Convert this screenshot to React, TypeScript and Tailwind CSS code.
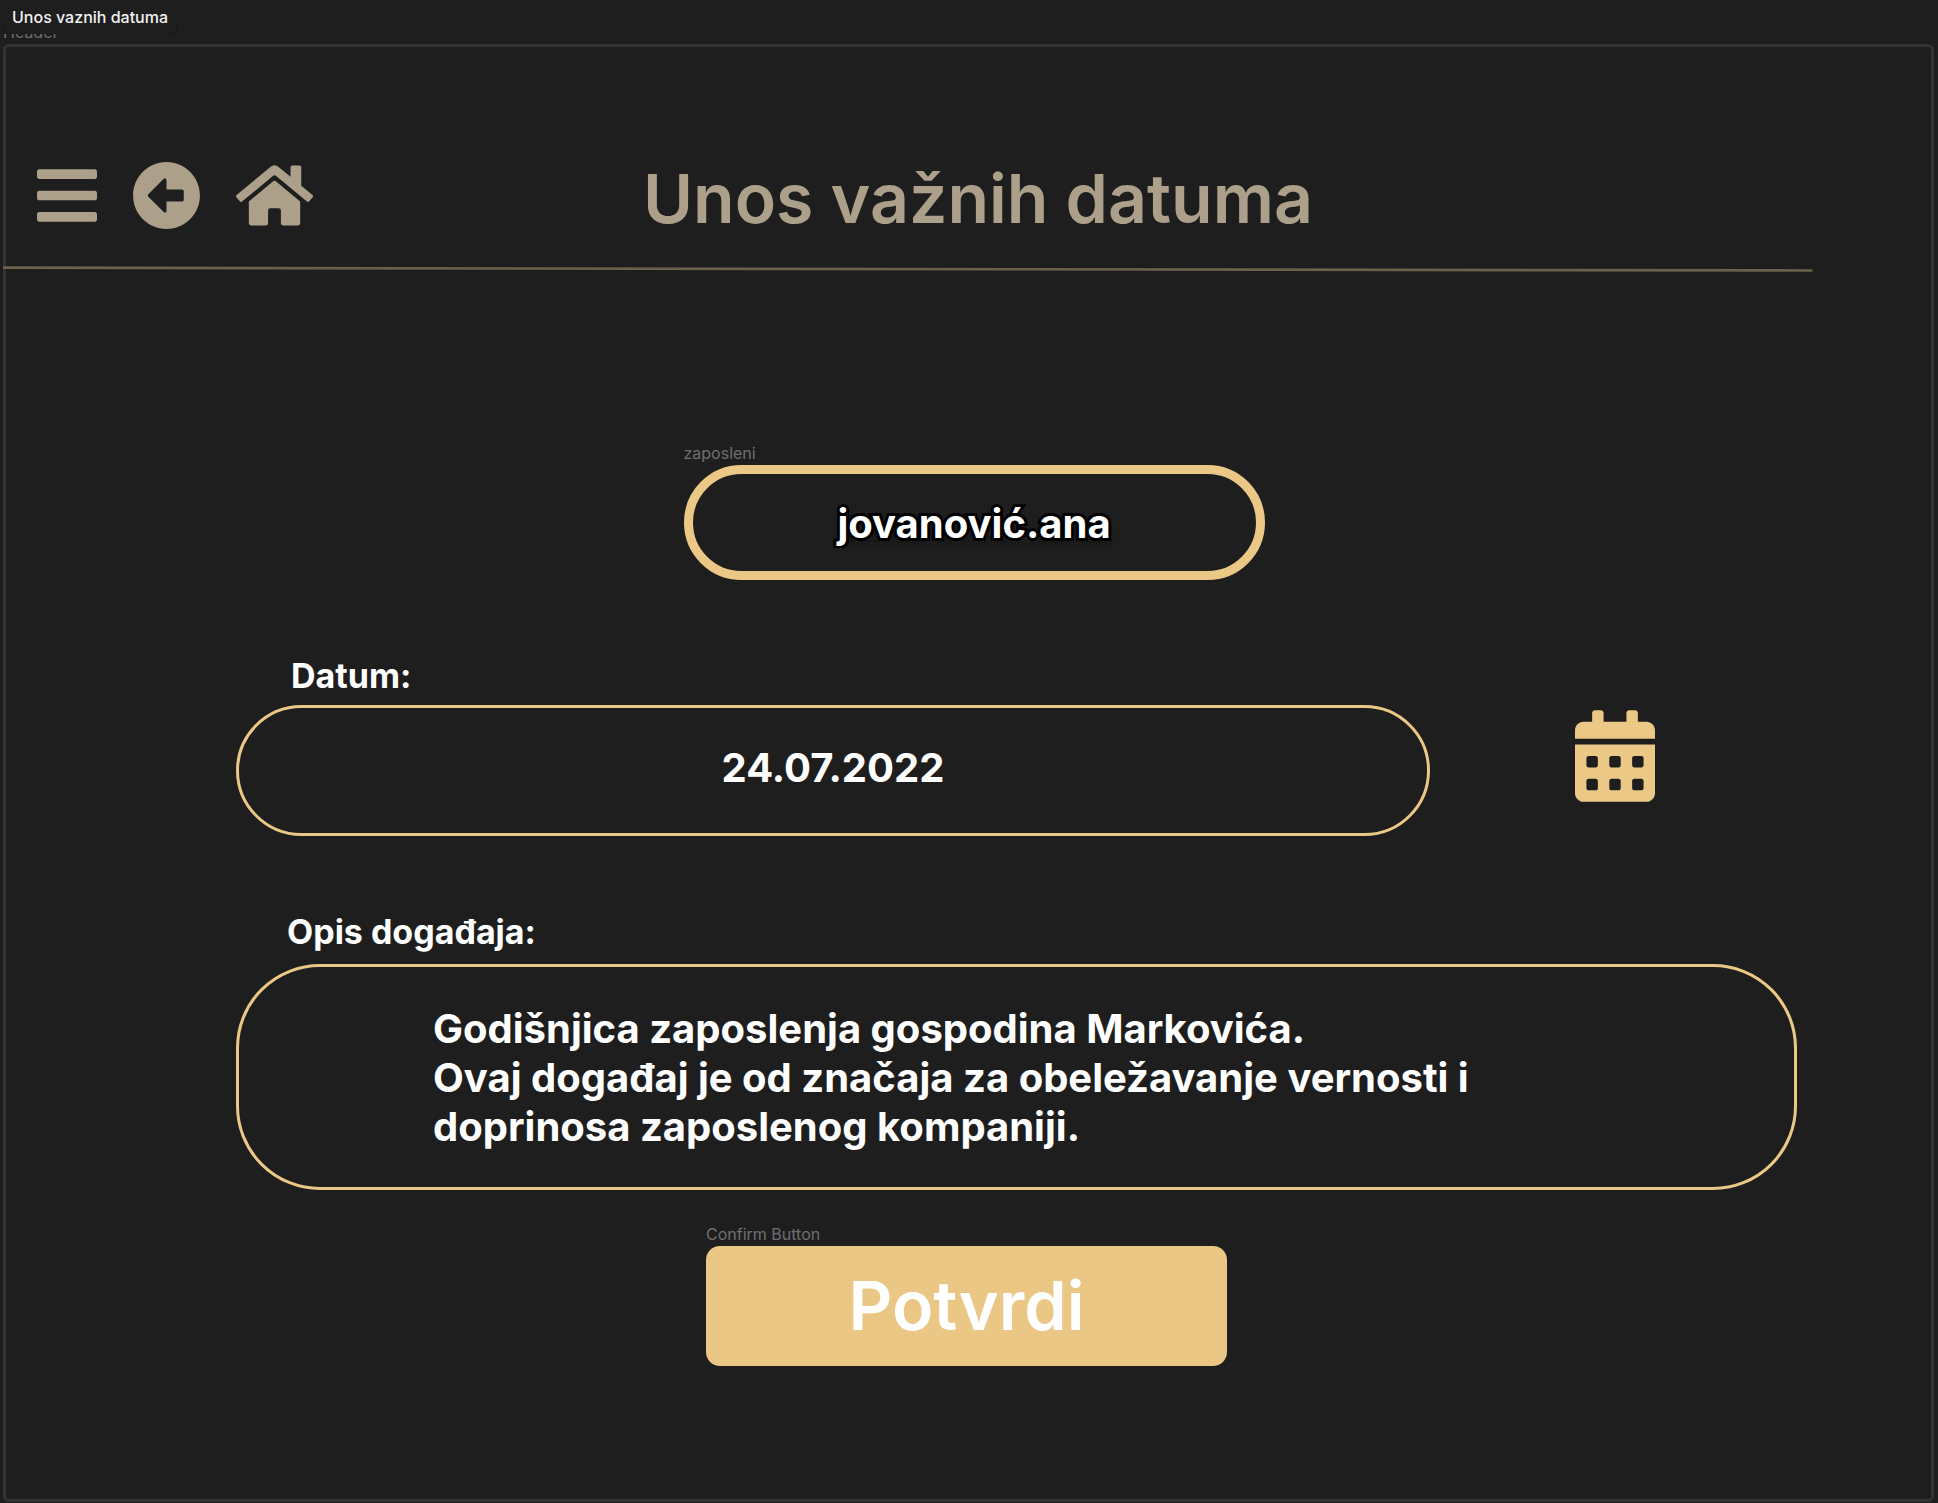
import { useState } from "react";
import {
  FaArrowAltCircleLeft,
  FaBars,
  FaCalendarAlt,
  FaHome,
} from "react-icons/fa";

const captionClass = "text-base leading-5 text-[#6f6f6f]";
const fieldLabelClass =
  "self-start text-[34px] leading-10 font-bold text-white";

function Header() {
  return (
    <header>
      <div className="grid grid-cols-[1fr_auto_1fr] items-start pt-[111px] pr-3 pb-7 pl-[31px] text-[#aca08b]">
        <nav
          aria-label="Navigacija"
          className="flex h-[74px] items-center gap-[34px]"
        >
          <button type="button" aria-label="Meni">
            <FaBars className="h-[69px] w-[60px]" />
          </button>
          <a href="#nazad" aria-label="Nazad">
            <FaArrowAltCircleLeft className="h-[69px] w-[71px]" />
          </a>
          <a href="#pocetna" aria-label="Početna">
            <FaHome className="h-[69px] w-[77px]" />
          </a>
        </nav>
        <h1 className="text-[68px] leading-20 font-semibold">
          Unos važnih datuma
        </h1>
      </div>
      <svg
        aria-hidden="true"
        viewBox="0 0 1809 6"
        preserveAspectRatio="none"
        className="-ml-[3px] block h-[6px] w-[94%]"
      >
        <line x1="0" y1="1.7" x2="1809" y2="4.5" stroke="#6d604b" strokeWidth="2.7" />
      </svg>
    </header>
  );
}

function EventForm() {
  const [employee, setEmployee] = useState("jovanović.ana");
  const [date, setDate] = useState("24.07.2022");
  const [description, setDescription] = useState(
    "Godišnjica zaposlenja gospodina Markovića.\nOvaj događaj je od značaja za obeležavanje vernosti i doprinosa zaposlenog kompaniji.",
  );

  return (
    <form
      className="flex flex-col pt-[171px] pb-20"
      onSubmit={(e) => e.preventDefault()}
    >
      <div className="flex justify-center pl-[11px]">
        <div className="flex w-[581px] flex-col gap-0.5">
          <label htmlFor="employee" className={captionClass}>
            zaposleni
          </label>
          <input
            id="employee"
            value={employee}
            onChange={(e) => setEmployee(e.target.value)}
            className="h-[115px] w-full rounded-full border-[9px] border-[#ebc885] bg-transparent pt-0.5 text-center text-[40px] font-bold text-white outline-none [-webkit-text-stroke:6px_#000] [paint-order:stroke_fill] [text-shadow:0_10px_10px_rgba(0,0,0,0.25)]"
          />
        </div>
      </div>

      <div className="mt-[76px] flex flex-col gap-[76px] pr-[134px] pl-[230px]">
        <div className="flex flex-col gap-[9px]">
          <label htmlFor="date" className={`${fieldLabelClass} pl-[55px]`}>
            Datum:
          </label>
          <div className="flex items-start gap-[145px] pr-[142px]">
            <input
              id="date"
              value={date}
              onChange={(e) => setDate(e.target.value)}
              className="h-[131px] min-w-0 flex-1 rounded-full border-3 border-[#ebc885] bg-transparent pb-1.5 text-center text-[40px] font-bold text-white outline-none"
            />
            <button type="button" aria-label="Izaberi datum" className="mt-[5px]">
              <FaCalendarAlt className="h-[92px] w-20 text-[#ebc885]" />
            </button>
          </div>
        </div>

        <div className="flex flex-col gap-3">
          <label htmlFor="description" className={`${fieldLabelClass} pl-[51px]`}>
            Opis događaja:
          </label>
          <textarea
            id="description"
            rows={3}
            value={description}
            onChange={(e) => setDescription(e.target.value)}
            className="block w-full resize-none overflow-hidden rounded-[84px] border-3 border-[#ebc885] bg-transparent pt-[37px] pr-[300px] pb-9 pl-[194px] text-[40px] leading-[49px] font-bold text-white outline-none"
          />
        </div>
      </div>

      <div className="mt-[34px] flex justify-center pr-1">
        <div className="flex w-[521px] flex-col gap-0.5">
          <span className={captionClass}>Confirm Button</span>
          <button
            type="submit"
            className="h-[120px] w-full rounded-[14px] bg-[#eac785] pb-0.5 text-[68px] leading-20 font-semibold text-white"
          >
            Potvrdi
          </button>
        </div>
      </div>
    </form>
  );
}

export default function App() {
  return (
    <div className="flex min-h-screen flex-col bg-[#1e1e1e] pr-1 pb-px pl-[3px] font-['Inter',sans-serif]">
      <div className="flex h-[34px] items-center self-start rounded-b-lg px-[9px] text-base font-medium text-[#f2f2f2] shadow-[0_0_1px_#000]">
        Unos vaznih datuma
      </div>
      <div className="flex h-2.5 items-end overflow-hidden pb-0.5">
        <span className={captionClass}>Header</span>
      </div>
      <main className="flex-1 rounded-md border-3 border-[#333333]">
        <Header />
        <EventForm />
      </main>
    </div>
  );
}
